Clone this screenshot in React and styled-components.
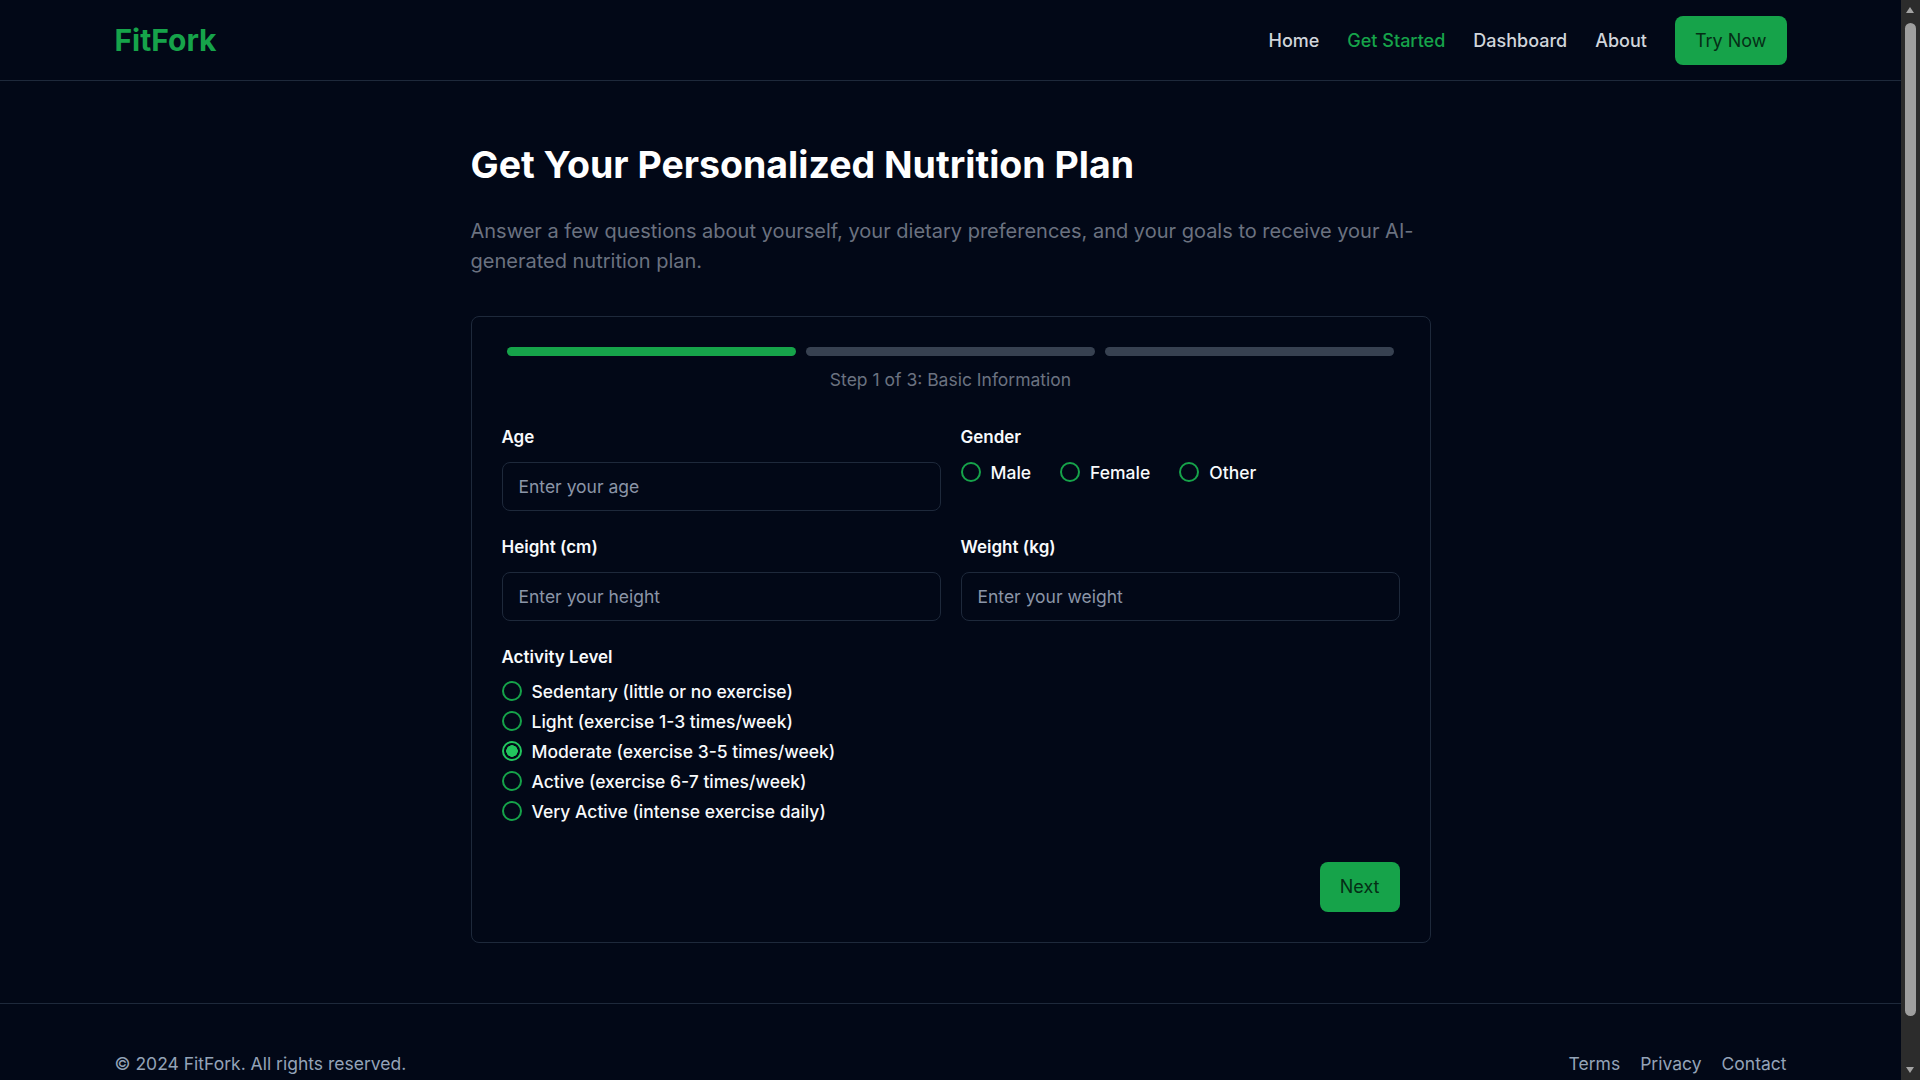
import React, { useState } from "react";
import styled, { createGlobalStyle } from "styled-components";

const GlobalStyle = createGlobalStyle`
  html, body { margin: 0; padding: 0; background: #020817; }
  body { font-family: Inter, "Noto Sans", "Liberation Sans", sans-serif; color: #f8fafc; }
  * { box-sizing: border-box; }
`;

const Page = styled.div`
  margin-right: 19px;
`;

const Scrollbar = styled.div`
  position: fixed;
  top: 0;
  right: 0;
  width: 19px;
  height: 100vh;
  background: #2c2c2c;
  z-index: 10;
`;

const ScrollThumb = styled.div`
  position: absolute;
  left: 4px;
  width: 11px;
  top: 23px;
  bottom: 64px;
  border-radius: 6px;
  background: #9f9f9f;
`;

const ScrollArrow = styled.div`
  position: absolute;
  left: 5px;
  ${(p) => (p.$down ? "bottom: 7px;" : "top: 7px;")}
  width: 0;
  height: 0;
  border-left: 4.5px solid transparent;
  border-right: 4.5px solid transparent;
  ${(p) => (p.$down ? "border-top: 6px solid #a3a3a3;" : "border-bottom: 6px solid #a3a3a3;")}
`;

const Header = styled.header`
  height: 81px;
  border-bottom: 1px solid #1e293b;
`;

const Container = styled.div`
  max-width: 1672px;
  margin: 0 auto;
  height: 100%;
  display: flex;
  align-items: center;
  justify-content: space-between;
`;

const Logo = styled.div`
  font-size: 30px;
  font-weight: 700;
  color: #16a34a;
`;

const Nav = styled.nav`
  display: flex;
  align-items: center;
  gap: 28px;
`;

const NavLink = styled.a`
  font-size: 18px;
  font-weight: 500;
  color: ${(p) => (p.$active ? "#16a34a" : "#d1d5db")};
  text-decoration: none;
  cursor: pointer;
`;

const GreenButton = styled.button`
  background: #16a34a;
  color: #052e16;
  border: none;
  border-radius: 8px;
  font-family: inherit;
  font-size: 18px;
  font-weight: 400;
  line-height: 29px;
  padding: 10px 20px;
  cursor: pointer;
`;

const Main = styled.main`
  padding: 64px 0 60px;
`;

const Content = styled.div`
  max-width: 960px;
  margin: 0 auto;
`;

const Title = styled.h1`
  margin: 0 0 31px;
  font-size: 37.5px;
  line-height: 40px;
  font-weight: 700;
  color: #ffffff;
`;

const Subtitle = styled.p`
  margin: 0 0 40px;
  font-size: 20px;
  line-height: 30px;
  color: #6b7280;
`;

const Card = styled.div`
  border: 1px solid #1e293b;
  border-radius: 8px;
  padding: 30px;
`;

const Progress = styled.div`
  display: flex;
`;

const Bar = styled.div`
  flex: 1;
  height: 9px;
  margin: 0 5px;
  border-radius: 999px;
  background: ${(p) => (p.$done ? "#16a34a" : "#374151")};
`;

const StepText = styled.div`
  margin: 12px 0 33px;
  text-align: center;
  font-size: 17.5px;
  line-height: 24px;
  color: #6b7280;
`;

const Grid = styled.div`
  display: grid;
  grid-template-columns: 1fr 1fr;
  column-gap: 20px;
  row-gap: 24px;
`;

const Field = styled.div`
  display: flex;
  flex-direction: column;
`;

const Label = styled.label`
  font-size: 17px;
  line-height: 24px;
  font-weight: 600;
  color: #f8fafc;
  margin-bottom: ${(p) => p.$mb || 13}px;
`;

const Input = styled.input`
  height: 49px;
  padding: 0 16px;
  background: #020817;
  border: 1px solid #1e293b;
  border-radius: 8px;
  font-family: inherit;
  font-size: 17.5px;
  color: #f8fafc;
  outline: none;
  &::placeholder { color: #8b95a7; }
`;

const RadioRow = styled.div`
  display: flex;
  align-items: center;
  gap: 29px;
  height: 20px;
  margin-top: 0;
`;

const RadioList = styled.div`
  display: flex;
  flex-direction: column;
  gap: 4px;
`;

const Option = styled.label`
  display: flex;
  align-items: center;
  gap: 10px;
  height: 26px;
  font-size: 17.5px;
  font-weight: 500;
  color: #f8fafc;
  cursor: pointer;
`;

const Radio = styled.input.attrs({ type: "radio" })`
  appearance: none;
  margin: 0;
  width: 20px;
  height: 20px;
  flex: none;
  border-radius: 50%;
  border: 2px solid #16a34a;
  background: transparent;
  cursor: pointer;
  &:checked {
    border-color: #22c55e;
    background: radial-gradient(circle, #22c55e 0 5.5px, transparent 6px);
  }
`;

const Actions = styled.div`
  display: flex;
  justify-content: flex-end;
  margin-top: 38px;
`;

const NextButton = styled(GreenButton)`
  line-height: 30px;
`;

const Footer = styled.footer`
  border-top: 1px solid #1e293b;
  padding: 48px 0 64px;
`;

const FooterText = styled.div`
  font-size: 17.5px;
  line-height: 24px;
  color: #94a3b8;
`;

const FooterLinks = styled.div`
  display: flex;
  gap: 20px;
`;

const FooterLink = styled.a`
  font-size: 17.5px;
  line-height: 24px;
  color: #94a3b8;
  text-decoration: none;
`;

const activities = [
  "Sedentary (little or no exercise)",
  "Light (exercise 1-3 times/week)",
  "Moderate (exercise 3-5 times/week)",
  "Active (exercise 6-7 times/week)",
  "Very Active (intense exercise daily)",
];

export default function App() {
  const [gender, setGender] = useState("");
  const [activity, setActivity] = useState(2);
  return (
    <>
      <GlobalStyle />
      <Page>
        <Header>
          <Container>
            <Logo>FitFork</Logo>
            <Nav>
              <NavLink>Home</NavLink>
              <NavLink $active>Get Started</NavLink>
              <NavLink>Dashboard</NavLink>
              <NavLink>About</NavLink>
              <GreenButton>Try Now</GreenButton>
            </Nav>
          </Container>
        </Header>
        <Main>
          <Content>
            <Title>Get Your Personalized Nutrition Plan</Title>
            <Subtitle>
              Answer a few questions about yourself, your dietary preferences, and your goals to receive your AI-generated nutrition plan.
            </Subtitle>
            <Card>
              <Progress>
                <Bar $done />
                <Bar />
                <Bar />
              </Progress>
              <StepText>Step 1 of 3: Basic Information</StepText>
              <Grid>
                <Field>
                  <Label>Age</Label>
                  <Input placeholder="Enter your age" />
                </Field>
                <Field>
                  <Label>Gender</Label>
                  <RadioRow>
                    {["Male", "Female", "Other"].map((g) => (
                      <Option key={g}>
                        <Radio name="gender" checked={gender === g} onChange={() => setGender(g)} />
                        {g}
                      </Option>
                    ))}
                  </RadioRow>
                </Field>
                <Field>
                  <Label>Height (cm)</Label>
                  <Input placeholder="Enter your height" />
                </Field>
                <Field>
                  <Label>Weight (kg)</Label>
                  <Input placeholder="Enter your weight" />
                </Field>
                <Field>
                  <Label $mb={9}>Activity Level</Label>
                  <RadioList>
                    {activities.map((a, i) => (
                      <Option key={a}>
                        <Radio name="activity" checked={activity === i} onChange={() => setActivity(i)} />
                        {a}
                      </Option>
                    ))}
                  </RadioList>
                </Field>
              </Grid>
              <Actions>
                <NextButton>Next</NextButton>
              </Actions>
            </Card>
          </Content>
        </Main>
        <Footer>
          <Container>
            <FooterText>© 2024 FitFork. All rights reserved.</FooterText>
            <FooterLinks>
              <FooterLink>Terms</FooterLink>
              <FooterLink>Privacy</FooterLink>
              <FooterLink>Contact</FooterLink>
            </FooterLinks>
          </Container>
        </Footer>
      </Page>
      <Scrollbar aria-hidden="true">
        <ScrollArrow />
        <ScrollThumb />
        <ScrollArrow $down />
      </Scrollbar>
    </>
  );
}
